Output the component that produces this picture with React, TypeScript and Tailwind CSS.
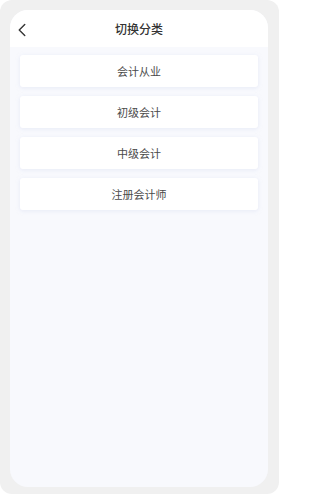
import { ChevronLeft } from 'lucide-react';

const categories = ['会计从业', '初级会计', '中级会计', '注册会计师'];

export default function App() {
  return (
    <div
      className="h-[494px] w-[279px] bg-white"
      style={{ fontFamily: '"Noto Sans CJK SC", "Noto Sans", sans-serif' }}
    >
      <div className="h-full w-full rounded-xl bg-[#f0f0f0] p-[10px] pb-[7px] pr-[11px]">
        <div className="flex h-full flex-col overflow-hidden rounded-[18px] bg-[#f8f9fd]">
          <header className="relative flex h-[37px] shrink-0 items-center justify-center bg-white">
            <ChevronLeft
              className="absolute left-[1px] top-[9px] h-[22px] w-[22px] text-[#3a3a3a]"
              strokeWidth={1.6}
            />
            <h1 className="text-[12px] font-medium text-[#333]">切换分类</h1>
          </header>
          <div className="flex flex-col gap-[9px] px-[10px] pt-[8px]">
            {categories.map((name) => (
              <div
                key={name}
                className="flex h-[32px] items-center justify-center rounded-[3px] bg-white text-[11px] text-[#4a4a4a] shadow-[0_1px_4px_rgba(200,210,235,0.35)]"
              >
                {name}
              </div>
            ))}
          </div>
        </div>
      </div>
    </div>
  );
}
